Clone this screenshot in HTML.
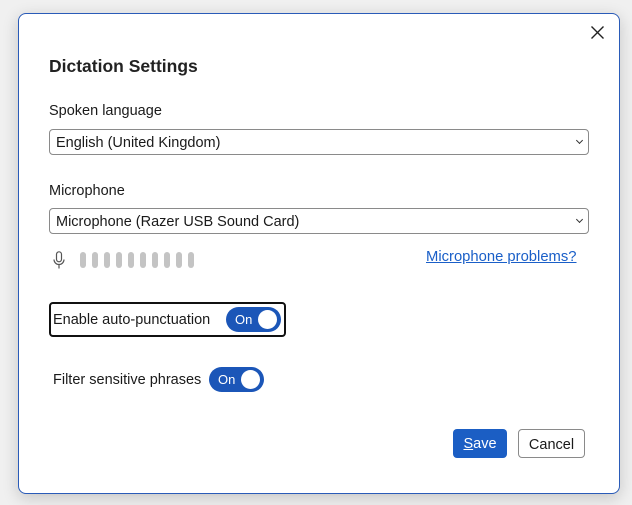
<!DOCTYPE html>
<html><head><style>
body{margin:0;width:632px;height:505px;background:#f0f0f0;font-family:"Segoe UI","Liberation Sans",sans-serif;color:#1a1a1a;position:relative;overflow:hidden}
.dlg{position:absolute;left:18px;top:13px;width:600px;height:479px;background:#fff;border:1px solid #2a5bb8;border-radius:8px;box-shadow:0 4px 16px rgba(0,0,0,.18)}
.a{position:absolute;white-space:nowrap}
.sel{position:absolute;left:49px;width:538px;height:24px;border:1px solid #8a8a8a;border-radius:4px;font-size:14.5px;line-height:26px;box-sizing:content-box}
.sel span{position:absolute;left:6px}
.sel i{position:absolute;right:6px;top:8px;width:4px;height:4px;border-right:1.2px solid #333;border-bottom:1.2px solid #333;transform:rotate(45deg)}
.tg{position:absolute;width:55px;height:25px;border-radius:13px;background:#1b56b8;color:#fff;font-size:13px}
.tg b{font-weight:normal;position:absolute;left:9px;top:5px}
.tg u{position:absolute;right:4px;top:3px;width:19px;height:19px;border-radius:50%;background:#fff}
.bar{position:absolute;top:252px;width:6px;height:16px;border-radius:3px;background:#c4c4c4}
</style></head><body>
<div class="dlg"></div>
<svg class="a" style="left:590px;top:25px" width="15" height="15"><path d="M1.5 1.5L13.5 13.5M13.5 1.5L1.5 13.5" stroke="#222" stroke-width="1.4"/></svg>
<div class="a" style="left:49px;top:56px;font-size:17.5px;font-weight:bold;color:#222">Dictation Settings</div>
<div class="a" style="left:49px;top:103px;font-size:14.5px">Spoken language</div>
<div class="sel" style="top:129px"><span>English (United Kingdom)</span><i></i></div>
<div class="a" style="left:49px;top:183px;font-size:14.5px">Microphone</div>
<div class="sel" style="top:208px"><span>Microphone (Razer USB Sound Card)</span><i></i></div>
<svg class="a" style="left:53px;top:251px" width="13" height="19"><rect x="3.5" y="0.8" width="5" height="10" rx="2.5" fill="none" stroke="#555" stroke-width="1.2"/><path d="M1 8.5a5 5 0 0 0 10 0M6 13.5V17.5" fill="none" stroke="#555" stroke-width="1.2"/></svg>
<div class="bar" style="left:80px"></div><div class="bar" style="left:92px"></div><div class="bar" style="left:104px"></div><div class="bar" style="left:116px"></div><div class="bar" style="left:128px"></div><div class="bar" style="left:140px"></div><div class="bar" style="left:152px"></div><div class="bar" style="left:164px"></div><div class="bar" style="left:176px"></div><div class="bar" style="left:188px"></div>
<div class="a" style="left:426px;top:249px;font-size:14.8px;color:#1a5fc8;text-decoration:underline">Microphone problems?</div>
<div class="a" style="left:49px;top:302px;width:233px;height:31px;border:2px solid #111;border-radius:4px"></div>
<div class="a" style="left:53px;top:312px;font-size:14.5px">Enable auto-punctuation</div>
<div class="tg" style="left:226px;top:307px"><b>On</b><u></u></div>
<div class="a" style="left:53px;top:372px;font-size:14.5px">Filter sensitive phrases</div>
<div class="tg" style="left:209px;top:367px"><b>On</b><u></u></div>
<div class="a" style="left:453px;top:429px;width:54px;height:29px;border-radius:4px;background:#1b5ec4;color:#fff;font-size:14.5px;line-height:31px;text-align:center"><span style="text-decoration:underline">S</span>ave</div>
<div class="a" style="left:518px;top:429px;width:65px;height:27px;border:1px solid #8a8a8a;border-radius:4px;font-size:14.5px;line-height:30px;text-align:center">Cancel</div>
</body></html>
